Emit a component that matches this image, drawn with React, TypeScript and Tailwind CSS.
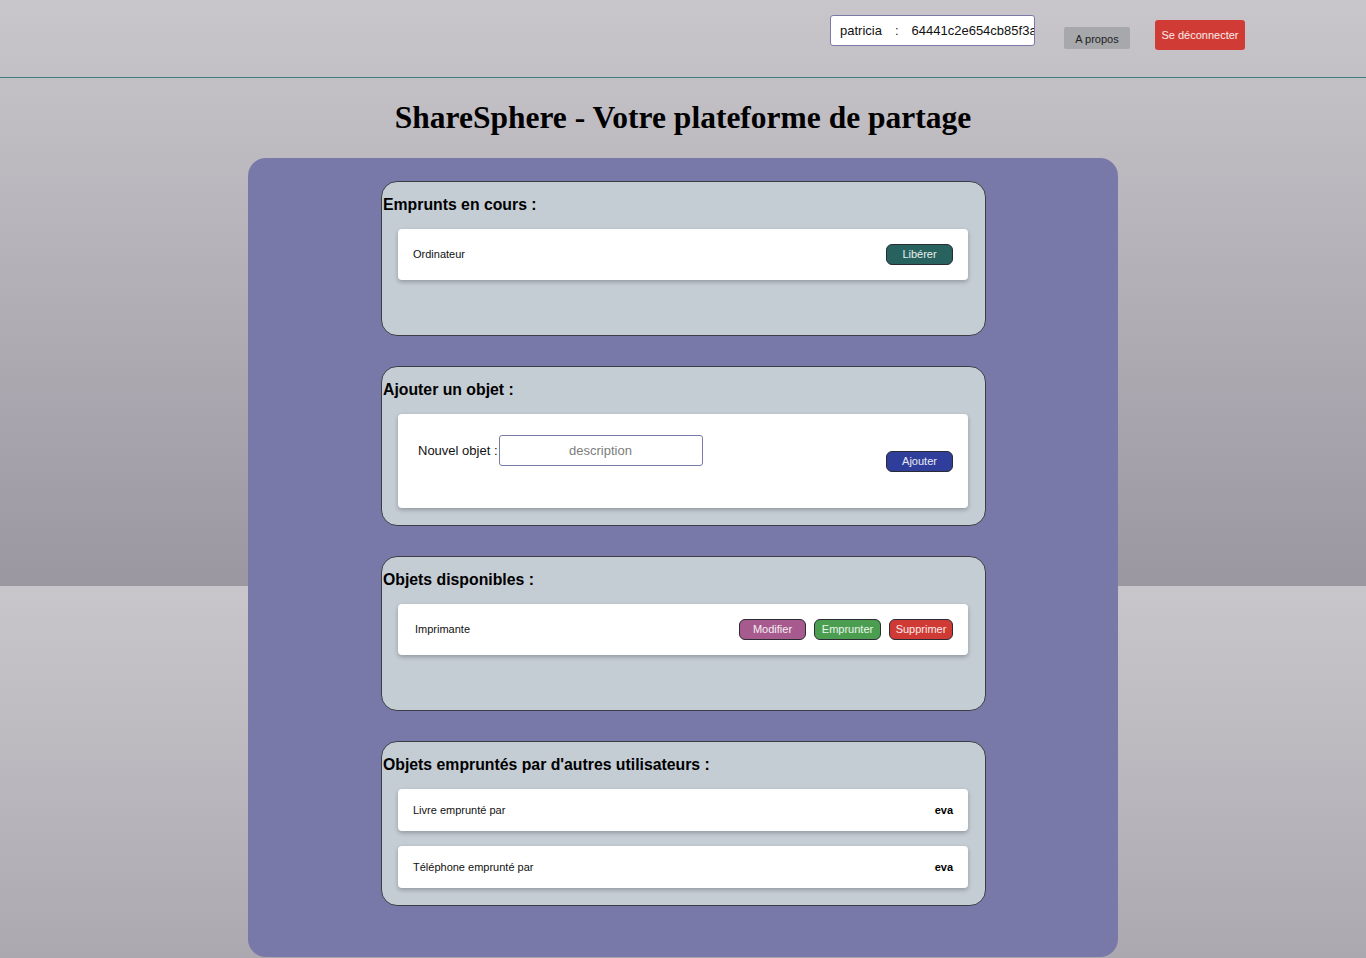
import React from 'react'

const sans = "font-['Liberation_Sans',Arial,sans-serif]"

const Section = ({ title, children }: { title: string; children: React.ReactNode }) => {
  return (
    <div className='w-[605px] min-h-[155px] bg-[#c4ccd4] border border-[#3d3d45] rounded-[16px] pt-[13px] pb-[17px]'>
      <h3 className='pl-px text-[15.8px] leading-[20px] font-bold text-black mb-[14px]'>{title}</h3>
      <div className='flex flex-col gap-[15px] pl-[16px] pr-[17px]'>{children}</div>
    </div>
  )
}

const Btn = ({ label, color }: { label: string; color: string }) => {
  return (
    <button className={`h-[21px] px-0 w-[67px] text-[11px] leading-none text-white/90 border border-[#2b2b33] rounded-[6px] ${color}`}>
      {label}
    </button>
  )
}

const App = () => {
  return (
    <div className={`${sans} min-h-screen w-full bg-[linear-gradient(#c9c6cb,#9a97a1)] bg-[length:100%_586px] bg-repeat`}>
      <div className='h-[78px] border-b border-[#3f7d7e] flex items-start justify-end pr-[121px]'>
        <div className='mt-[15px] w-[205px] h-[31px] bg-white border border-[#7a7aa8] rounded-[3px] flex items-center pl-[9px] overflow-hidden whitespace-nowrap text-[13px] text-[#111]'>
          <span>patricia</span>
          <span className='ml-[13px]'>:</span>
          <span className='ml-[13px]'>64441c2e654cb85f3a91</span>
        </div>
        <button className='ml-[29px] mt-[27px] w-[66px] h-[22px] bg-[#a6a8ab] rounded-[2px] text-[11px] text-[#222] pt-[2px]'>A propos</button>
        <button className='ml-[25px] mt-[20px] w-[90px] h-[30px] bg-[#d03c35] rounded-[3px] text-[11px] text-white/90'>Se déconnecter</button>
      </div>

      <h1 className="font-['Liberation_Serif',serif] text-[31.5px] leading-[37px] font-bold text-black text-center mt-[21px] mb-[22px]">
        ShareSphere - Votre plateforme de partage
      </h1>

      <div className='w-[870px] mx-auto bg-[#7879a9] rounded-[18px] pt-[23px] pb-[51px] pl-[133px] flex flex-col items-start gap-[30px]'>
        <Section title='Emprunts en cours :'>
          <div className='bg-white rounded-[4px] shadow-[0_2px_4px_rgba(0,0,0,0.25)] h-[51px] pl-[15px] pr-[15px] flex items-center justify-between'>
            <span className='text-[11px] text-[#111]'>Ordinateur</span>
            <Btn label='Libérer' color='bg-[#28625f]' />
          </div>
        </Section>

        <Section title='Ajouter un objet :'>
          <div className='bg-white rounded-[4px] shadow-[0_2px_4px_rgba(0,0,0,0.25)] h-[94px] pl-[20px] pr-[15px] flex items-center justify-between'>
            <div className='self-start mt-[21px] flex items-center gap-[1px]'>
              <span className='text-[13px] text-[#111]'>Nouvel objet :</span>
              <div className='w-[204px] h-[31px] border border-[#7a7aa8] rounded-[3px] flex items-center justify-center text-[13px] text-[#7d7d7d]'>
                description
              </div>
            </div>
            <Btn label='Ajouter' color='bg-[#2f3e9a]' />
          </div>
        </Section>

        <Section title='Objets disponibles :'>
          <div className='bg-white rounded-[4px] shadow-[0_2px_4px_rgba(0,0,0,0.25)] h-[51px] pl-[17px] pr-[15px] flex items-center justify-between'>
            <span className='text-[11px] text-[#111]'>Imprimante</span>
            <div className='flex gap-[8px]'>
              <Btn label='Modifier' color='bg-[#a65a8d]' />
              <Btn label='Emprunter' color='bg-[#4b9e50]' />
              <Btn label='Supprimer' color='bg-[#cf3a35] !w-[64px]' />
            </div>
          </div>
        </Section>

        <Section title="Objets empruntés par d'autres utilisateurs :">
          {['Livre', 'Téléphone'].map((o) => (
            <div key={o} className='bg-white rounded-[4px] shadow-[0_2px_4px_rgba(0,0,0,0.25)] h-[42px] pl-[15px] pr-[15px] flex items-center justify-between'>
              <span className='text-[11px] text-[#111]'>{o} emprunté par</span>
              <span className='text-[11px] font-bold text-black'>eva</span>
            </div>
          ))}
        </Section>
      </div>
    </div>
  )
}

export default App
